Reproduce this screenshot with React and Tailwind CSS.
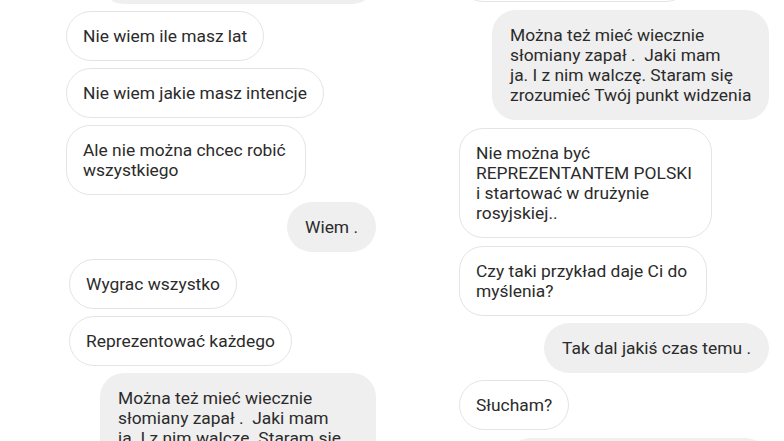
const them = "shrink-0 whitespace-nowrap border border-[#e4e4e4] bg-white px-[16px] py-[14px]";
const me = "self-end shrink-0 whitespace-nowrap bg-[#efefef] px-[18px] py-[15px]";

// width: pass a fixed width for the wrapped bubbles, else it fits the text
const Them = ({ children, w = "w-fit rounded-[25px]", className = "" }) => (
  <div className={`${them} ${w} ${className}`}>{children}</div>
);

const Me = ({ children, w = "w-fit rounded-[25px]", className = "" }) => (
  <div className={`${me} ${w} ${className}`}>{children}</div>
);

const LeftColumn = () => (
  <div className="flex w-[392px] shrink-0 flex-col gap-[7px] pl-[66px] pr-[16px]">
    {/* cut-off bubble from the previous screen */}
    <div className="-mt-[46px] h-[50px] w-[276px] shrink-0 self-end rounded-[24px] bg-[#efefef]" />
    <Them>Nie wiem ile masz lat</Them>
    <Them>Nie wiem jakie masz intencje</Them>
    <Them w="w-[240px] rounded-[24px]">
      Ale nie można chcec robić
      <br />
      wszystkiego
    </Them>
    <Me>Wiem .</Me>
    <Them className="ml-[3px]">Wygrac wszystko</Them>
    <Them className="ml-[3px]">Reprezentować każdego</Them>
    <Me w="w-[276px] rounded-[24px]">
      Można też mieć wiecznie
      <br />
      słomiany zapał .&nbsp; Jaki mam
      <br />
      ja. I z nim walczę. Staram się
      <br />
      zrozumieć Twój punkt widzenia
    </Me>
  </div>
);

const RightColumn = () => (
  <div className="flex w-[392px] shrink-0 flex-col gap-[8px] pl-[67px] pr-[15px]">
    <div className="-mt-[48px] h-[50px] w-[231px] shrink-0 rounded-[24px] border border-[#e4e4e4] bg-white" />
    <Me w="w-[277px] rounded-[24px]">
      Można też mieć wiecznie
      <br />
      słomiany zapał .&nbsp; Jaki mam
      <br />
      ja. I z nim walczę. Staram się
      <br />
      zrozumieć Twój punkt widzenia
    </Me>
    <Them w="w-[253px] rounded-[24px]">
      Nie można być
      <br />
      REPREZENTANTEM POLSKI
      <br />
      i startować w drużynie
      <br />
      rosyjskiej..
    </Them>
    <Them w="w-[248px] rounded-[24px]">
      Czy taki przykład daje Ci do
      <br />
      myślenia?
    </Them>
    <Me className="-mt-[1px]">Tak dal jakiś czas temu .</Me>
    <Them className="-mt-[1px]">Słucham?</Them>
    <div className="h-[50px] w-[262px] shrink-0 self-end rounded-[24px] bg-[#efefef]" />
  </div>
);

export default function App() {
  return (
    <div
      className="flex h-[441px] w-[784px] overflow-hidden bg-white text-[17.4px] leading-[20px] text-[#2b2b2b]"
      style={{ fontFamily: "Roboto, 'Noto Sans', sans-serif" }}
    >
      <LeftColumn />
      <RightColumn />
    </div>
  );
}
